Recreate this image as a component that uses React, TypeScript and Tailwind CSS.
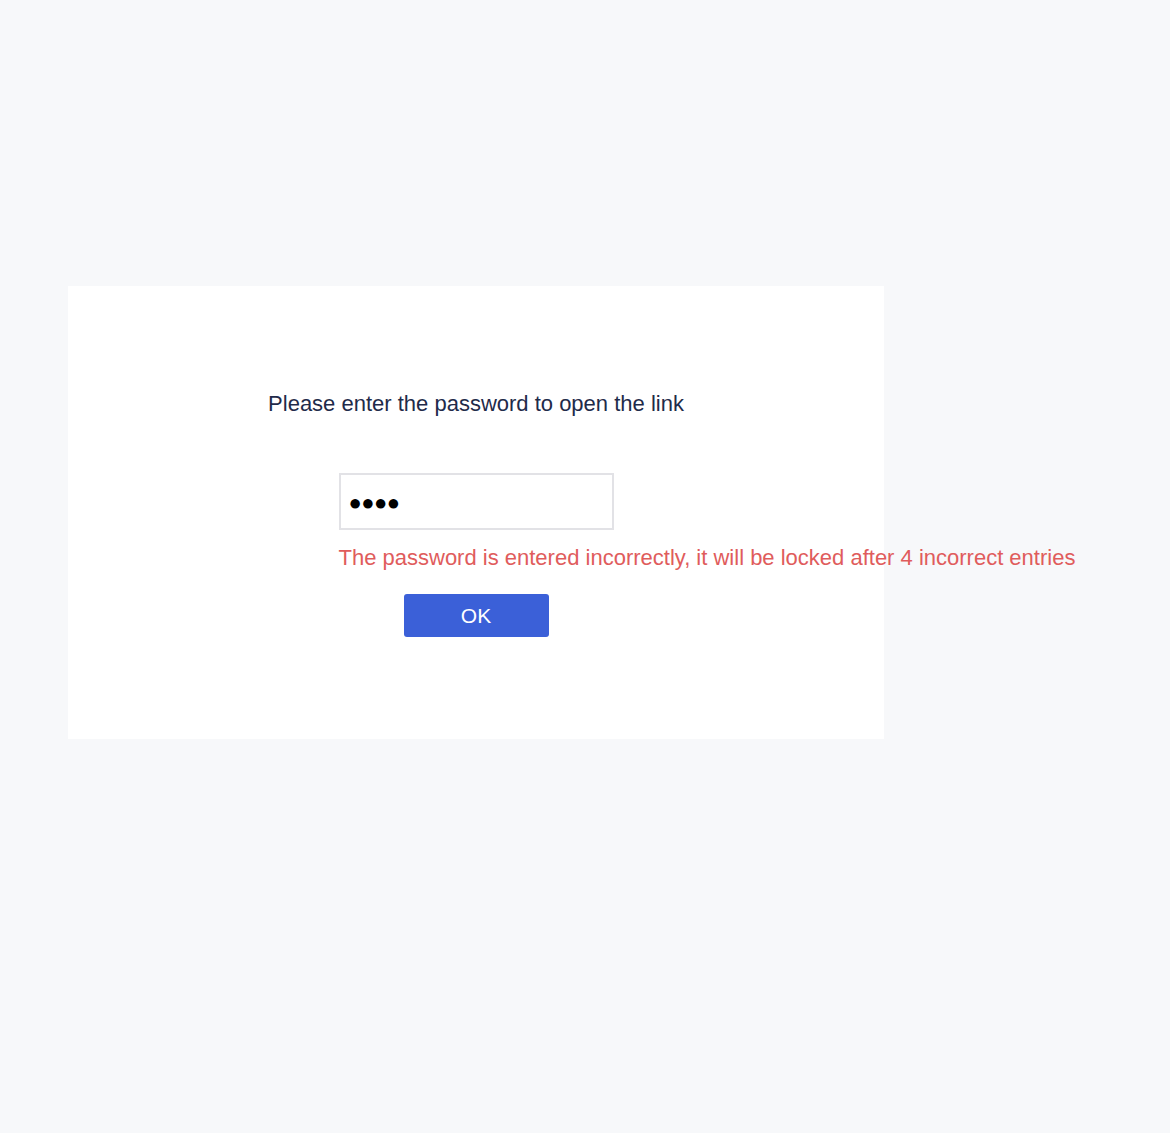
import React from 'react';

const App: React.FC = () => {
  return (
    <div className="min-h-[1133px] w-full bg-[#f7f8fa] font-['Liberation_Sans',Arial,sans-serif] pt-[286px] pl-[68px]">
      <div className="w-[816px] h-[453px] bg-white flex flex-col items-center pt-[104px]">
        <p className="text-[22px] leading-[28px] text-[#1f2b4a]">Please enter the password to open the link</p>

        <div className="mt-[55px] w-[275px]">
          <div className="h-[57px] border-2 border-[#e2e2e6] bg-white flex items-center pl-[8px] pt-[2px]">
            <span className="text-[22px] leading-none tracking-[-0.5px] text-black">●●●●</span>
          </div>
          <p className="mt-[15px] whitespace-nowrap text-[22px] leading-[26px] text-[#e05c5c]">
            The password is entered incorrectly, it will be locked after 4 incorrect entries
          </p>
        </div>

        <button className="mt-[23px] w-[145px] h-[43px] rounded-[3px] bg-[#3b60d8] text-white text-[21px]">
          OK
        </button>
      </div>
    </div>
  );
};

export default App;
